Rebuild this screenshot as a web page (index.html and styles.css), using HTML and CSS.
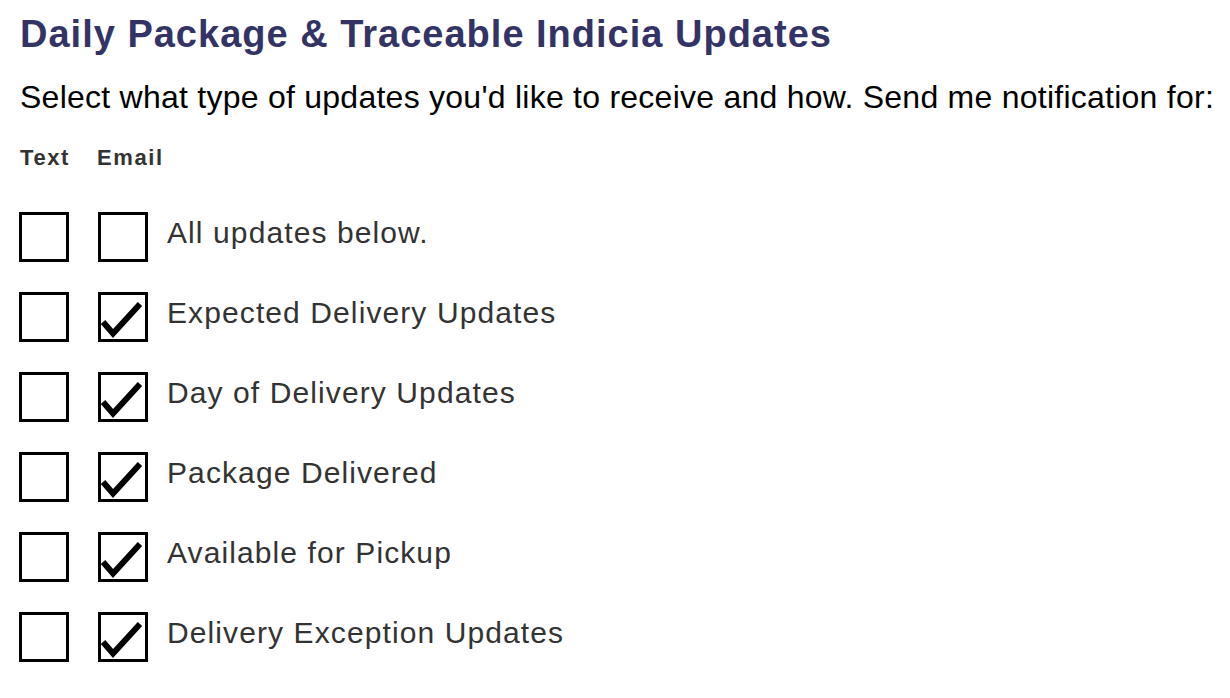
FILE: index.html
```html
<!DOCTYPE html>
<html>
<head>
<meta charset="utf-8">
<link rel="stylesheet" href="styles.css">
</head>
<body>
<div class="page">
  <h1 class="title">Daily Package &amp; Traceable Indicia Updates</h1>
  <p class="intro">Select what type of updates you'd like to receive and how. Send me notification for:</p>
  <div class="heads"><span class="head head-text">Text</span><span class="head">Email</span></div>
  <div class="list">
    <div class="row"><span class="box box-first"></span><span class="box"></span><span class="label">All updates below.</span></div>
    <div class="row"><span class="box box-first"></span><span class="box"><svg class="check" viewBox="0 0 44 44"><path d="M2 27 L12 38.5 L39 9"/></svg></span><span class="label">Expected Delivery Updates</span></div>
    <div class="row"><span class="box box-first"></span><span class="box"><svg class="check" viewBox="0 0 44 44"><path d="M2 27 L12 38.5 L39 9"/></svg></span><span class="label">Day of Delivery Updates</span></div>
    <div class="row"><span class="box box-first"></span><span class="box"><svg class="check" viewBox="0 0 44 44"><path d="M2 27 L12 38.5 L39 9"/></svg></span><span class="label">Package Delivered</span></div>
    <div class="row"><span class="box box-first"></span><span class="box"><svg class="check" viewBox="0 0 44 44"><path d="M2 27 L12 38.5 L39 9"/></svg></span><span class="label">Available for Pickup</span></div>
    <div class="row"><span class="box box-first"></span><span class="box"><svg class="check" viewBox="0 0 44 44"><path d="M2 27 L12 38.5 L39 9"/></svg></span><span class="label">Delivery Exception Updates</span></div>
  </div>
</div>
</body>
</html>
```
FILE: styles.css
```css
html, body { margin: 0; padding: 0; background: #fff; }
body { font-family: "Liberation Sans", Arial, sans-serif; }
.page { padding: 12px 0 0 20px; }
.title { margin: 0; font-size: 38px; font-weight: bold; color: #333366; line-height: 44px; letter-spacing: 1px; }
.intro { margin: 22px 0 0; font-size: 32px; color: #000; line-height: 38px; letter-spacing: 0.25px; white-space: nowrap; }
.heads { margin-top: 29px; display: flex; font-size: 22px; font-weight: bold; color: #333; letter-spacing: 1.6px; line-height: 26px; }
.head-text { width: 77px; }
.list { margin-top: 41px; display: flex; flex-direction: column; gap: 30px; }
.row { display: flex; align-items: flex-start; height: 50px; }
.box { width: 44px; height: 44px; border: 3px solid #000; display: block; flex: none; margin-right: 19px; }
.box-first { margin-left: -1px; margin-right: 29px; }
.check { width: 44px; height: 44px; display: block; fill: none; stroke: #000; stroke-width: 6; stroke-linecap: butt; stroke-linejoin: miter; }
.label { font-size: 30px; color: #333; line-height: 34px; margin-top: 4px; letter-spacing: 1.1px; }
```
